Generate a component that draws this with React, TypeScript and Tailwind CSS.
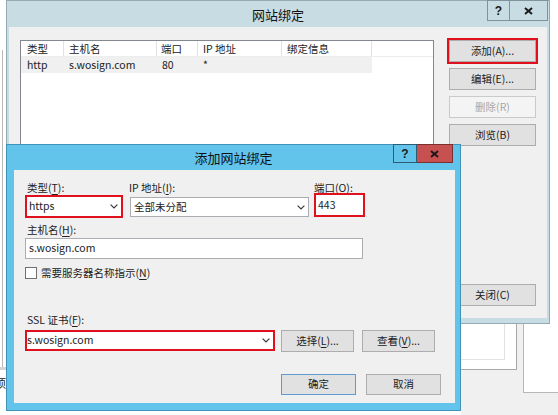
import React from "react";

const Chevron = () => (
  <svg width="8" height="5" viewBox="0 0 8 5" className="shrink-0">
    <polyline points="0.6,0.6 4,4 7.4,0.6" fill="none" stroke="#3a3a3a" strokeWidth="1.2" />
  </svg>
);

const Cross = ({ color = "#1a1a1a" }: { color?: string }) => (
  <svg width="9" height="8" viewBox="0 0 9 8">
    <line x1="1" y1="1" x2="8" y2="7" stroke={color} strokeWidth="2" />
    <line x1="8" y1="1" x2="1" y2="7" stroke={color} strokeWidth="2" />
  </svg>
);

function Btn({
  children,
  className = "",
  disabled = false,
}: {
  children: React.ReactNode;
  className?: string;
  disabled?: boolean;
}) {
  return (
    <div
      className={
        "flex items-center justify-center border text-[10.5px] leading-none " +
        (disabled
          ? "bg-[#f4f4f4] border-[#cacaca] text-[#a8a8a8] "
          : "bg-[#e1e1e1] border-[#adadad] text-[#222222] ") +
        className
      }
    >
      {children}
    </div>
  );
}

const U = ({ children }: { children: React.ReactNode }) => (
  <span className="underline underline-offset-[1.5px]">{children}</span>
);

export default function App() {
  return (
    <div className="relative w-[558px] h-[415px] overflow-hidden bg-white font-['Noto_Sans_CJK_SC',sans-serif] text-[10.5px] text-[#222222]">
      {/* background window fragments */}
      <div className="absolute left-[2px] top-[50px] w-px h-[318px] bg-[#b8b8b8]" />
      <div className="absolute left-0 top-[367px] w-[6px] h-[3px] bg-[#d4d4d4]" />
      <span className="absolute left-[-5px] top-[376px] text-[11px] leading-[14px]">项</span>
      <div className="absolute left-[461px] top-[324px] w-[97px] h-[91px] bg-[#f0f0f0] flex items-start">
        <div className="w-[56px] h-[46px] bg-white border-r border-b border-[#a8a8a8]">
          <div className="w-[44px] h-[36px] border-r border-b border-[#e2e2e2]" />
        </div>
        <div className="ml-[6px] flex-1 h-[69px] bg-white border-l border-b border-[#b8b8b8]" />
      </div>

      {/* outer dialog: 网站绑定 */}
      <div className="absolute left-[6px] top-0 w-[544px] h-[324px] flex flex-col bg-[#c8dce4] border border-[#94a9b2]">
        <div className="relative h-[26px] shrink-0 flex items-center justify-center">
          <span className="text-[13px] leading-none text-[#111111]">网站绑定</span>
          <div className="absolute right-[1px] top-[-1px] flex">
            <div className="w-[23px] h-[21px] border border-[#7f939c] flex items-center justify-center font-['Liberation_Sans',sans-serif] font-bold text-[12px] text-[#1a1a1a]">
              ?
            </div>
            <div className="w-[38px] h-[21px] border border-l-0 border-[#7f939c] flex items-center justify-center">
              <Cross />
            </div>
          </div>
        </div>
        <div className="flex-1 mx-[2px] mb-[5px] bg-[#f0f0f0] flex gap-[15px] pt-[13px] pl-[11px] pr-[11px] pb-[12px]">
          <div className="w-[414px] bg-white border border-[#828790] flex flex-col">
            <div className="h-[16px] flex border-b border-[#ededed] leading-[16px]">
              <div className="w-[43px] pl-[6px] border-r border-[#e2e2e2]">类型</div>
              <div className="w-[93px] pl-[5px] border-r border-[#e2e2e2]">主机名</div>
              <div className="w-[41px] pl-[4px] border-r border-[#e2e2e2]">端口</div>
              <div className="w-[84px] pl-[5px] border-r border-[#e2e2e2]">IP 地址</div>
              <div className="w-[90px] pl-[5px] border-r border-[#e2e2e2]">绑定信息</div>
            </div>
            <div className="h-[16px] flex w-[351px] bg-[#f0f0f0] leading-[16px]">
              <div className="w-[43px] pl-[6px]">http</div>
              <div className="w-[93px] pl-[5px]">s.wosign.com</div>
              <div className="w-[41px] pl-[5px]">80</div>
              <div className="w-[84px] pl-[5px]">*</div>
              <div className="w-[90px]" />
            </div>
          </div>
          <div className="w-[87px] flex flex-col gap-[6px]">
            <Btn className="h-[22px] ring-2 ring-[#e0101c]">添加(A)...</Btn>
            <Btn className="h-[22px]">编辑(E)...</Btn>
            <Btn className="h-[22px]" disabled>
              删除(R)
            </Btn>
            <Btn className="h-[22px]">浏览(B)</Btn>
            <Btn className="h-[22px] mt-auto">关闭(C)</Btn>
          </div>
        </div>
      </div>

      {/* inner dialog: 添加网站绑定 */}
      <div className="absolute left-[6px] top-[144px] w-[455px] h-[267px] flex flex-col bg-[#62c4ea] border border-[#3f93b9]">
        <div className="relative h-[25px] shrink-0 flex items-center justify-center">
          <span className="text-[13px] leading-none text-[#111111]">添加网站绑定</span>
          <div className="absolute right-[7px] top-[-1px] flex">
            <div className="w-[24px] h-[19px] border border-[#2d5d75] flex items-center justify-center font-['Liberation_Sans',sans-serif] font-bold text-[12px] text-[#1a1a1a]">
              ?
            </div>
            <div className="w-[36px] h-[19px] bg-[#c75050] border border-l-0 border-[#7d2f2f] flex items-center justify-center">
              <Cross />
            </div>
          </div>
        </div>
        <div className="flex-1 ml-[7px] mr-[5px] mb-[7px] bg-[#f0f0f0] flex flex-col pl-[11px] pt-[10px]">
          {/* row 1 */}
          <div className="flex items-start">
            <div className="w-[98px] flex flex-col">
              <div className="h-[15px] leading-[15px] pl-[2px]">
                类型(<U>T</U>):
              </div>
              <div className="h-[23px] bg-white border-2 border-[#e0101c] flex items-center justify-between pl-[2px] pr-[3px]">
                <span className="leading-none">https</span>
                <Chevron />
              </div>
            </div>
            <div className="ml-[7px] w-[179px] flex flex-col">
              <div className="h-[15px] leading-[15px] -ml-[1px]">
                IP 地址(<U>I</U>):
              </div>
              <div className="mt-[2px] h-[20px] bg-white border border-[#abadb3] flex items-center justify-between pl-[3px] pr-[3px]">
                <span className="leading-none">全部未分配</span>
                <Chevron />
              </div>
            </div>
            <div className="ml-[5px] w-[51px] flex flex-col">
              <div className="h-[15px] leading-[15px]">
                端口(<U>O</U>):
              </div>
              <div className="-mt-[2px] h-[24px] bg-white border-2 border-[#e0101c] flex items-center pl-[2px]">
                <span className="leading-none">443</span>
              </div>
            </div>
          </div>
          {/* host name */}
          <div className="mt-[4px] h-[15px] leading-[15px] pl-[2px]">
            主机名(<U>H</U>):
          </div>
          <div className="mt-[1px] w-[338px] h-[21px] bg-white border border-[#abadb3] flex items-center pl-[3px]">
            <span className="leading-none">s.wosign.com</span>
          </div>
          {/* checkbox */}
          <div className="mt-[8px] h-[12px] flex items-center">
            <div className="w-[12px] h-[12px] bg-white border border-[#707070]" />
            <span className="ml-[4px] leading-none">
              需要服务器名称指示(<U>N</U>)
            </span>
          </div>
          {/* SSL */}
          <div className="mt-[33px] h-[15px] leading-[15px] pl-[2px]">
            SSL 证书(<U>F</U>):
          </div>
          <div className="mt-[3px] flex items-start">
            <div className="w-[250px] h-[21px] bg-white border-2 border-[#e0101c] flex items-center justify-between pl-[0px] pr-[3px]">
              <span className="leading-none">s.wosign.com</span>
              <Chevron />
            </div>
            <Btn className="ml-[6px] w-[73px] h-[22px]">
              选择(<U>L</U>)...
            </Btn>
            <Btn className="ml-[8px] w-[73px] h-[22px]">
              查看(<U>V</U>)...
            </Btn>
          </div>
          {/* OK / Cancel */}
          <div className="mt-[22px] flex justify-end gap-[10px] pr-[14px]">
            <Btn className="w-[75px] h-[21px] !border-[#5f9bd0]">确定</Btn>
            <Btn className="w-[75px] h-[21px]">取消</Btn>
          </div>
        </div>
      </div>
    </div>
  );
}
